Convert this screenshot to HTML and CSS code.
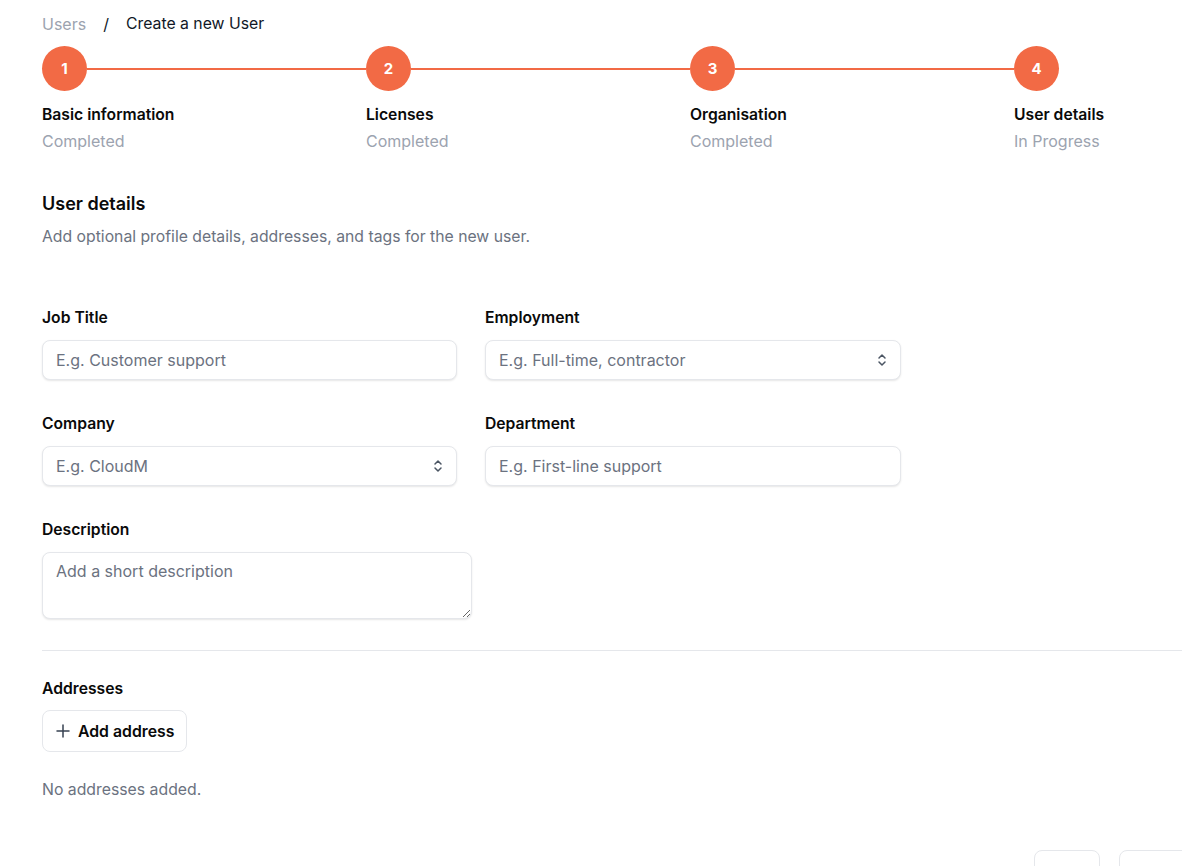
FILE: index.html
```html
<!DOCTYPE html>
<html lang="en">

<head>
    <meta charset="UTF-8">
    <meta name="viewport" content="width=device-width, initial-scale=1.0">
    <title>Create a new User</title>
    <link rel="stylesheet" href="styles.css">
</head>

<body>
    <div class="page">
        <div class="crumbs">
            <span class="crumb-link">Users</span>
            <span class="crumb-sep">/</span>
            <span class="crumb-current">Create a new User</span>
        </div>

        <ol class="stepper">
            <li class="step">
                <div class="step-track"><span class="step-dot">1</span><span class="step-line"></span></div>
                <div class="step-title">Basic information</div>
                <div class="step-status">Completed</div>
            </li>
            <li class="step">
                <div class="step-track"><span class="step-dot">2</span><span class="step-line"></span></div>
                <div class="step-title">Licenses</div>
                <div class="step-status">Completed</div>
            </li>
            <li class="step">
                <div class="step-track"><span class="step-dot">3</span><span class="step-line"></span></div>
                <div class="step-title">Organisation</div>
                <div class="step-status">Completed</div>
            </li>
            <li class="step">
                <div class="step-track"><span class="step-dot">4</span></div>
                <div class="step-title">User details</div>
                <div class="step-status">In Progress</div>
            </li>
        </ol>

        <h2 class="section-title">User details</h2>
        <p class="section-desc">Add optional profile details, addresses, and tags for the new user.</p>

        <div class="form-grid">
            <div class="field">
                <label class="field-label">Job Title</label>
                <input class="input" type="text" placeholder="E.g. Customer support">
            </div>
            <div class="field">
                <label class="field-label">Employment</label>
                <div class="input select">
                    <span class="placeholder">E.g. Full-time, contractor</span>
                    <svg class="chevrons" width="10" height="14" viewBox="0 0 10 14" fill="none" stroke="#4b5563" stroke-width="1.5" stroke-linecap="round" stroke-linejoin="round"><path d="M2 5 L5 2 L8 5"/><path d="M2 9 L5 12 L8 9"/></svg>
                </div>
            </div>
            <div class="field">
                <label class="field-label">Company</label>
                <div class="input select">
                    <span class="placeholder">E.g. CloudM</span>
                    <svg class="chevrons" width="10" height="14" viewBox="0 0 10 14" fill="none" stroke="#4b5563" stroke-width="1.5" stroke-linecap="round" stroke-linejoin="round"><path d="M2 5 L5 2 L8 5"/><path d="M2 9 L5 12 L8 9"/></svg>
                </div>
            </div>
            <div class="field">
                <label class="field-label">Department</label>
                <input class="input" type="text" placeholder="E.g. First-line support">
            </div>
            <div class="field">
                <label class="field-label">Description</label>
                <textarea class="input textarea" placeholder="Add a short description"></textarea>
            </div>
        </div>

        <hr class="divider">

        <div class="addresses">
            <div class="field-label">Addresses</div>
            <button class="btn-add" type="button">
                <svg width="14" height="14" viewBox="0 0 14 14" fill="none" stroke="#374151" stroke-width="1.5" stroke-linecap="round"><path d="M7 1v12M1 7h12"/></svg>
                Add address
            </button>
            <p class="empty">No addresses added.</p>
        </div>

        <div class="actions">
            <button class="btn-outline" type="button"></button>
            <button class="btn-outline btn-wide" type="button"></button>
        </div>
    </div>
</body>

</html>
```

FILE: styles.css
```css
* {
    margin: 0;
    padding: 0;
    box-sizing: border-box;
}

html,
body {
    overflow: hidden;
}

body {
    font-family: Inter, "Liberation Sans", sans-serif;
    color: #0a0a0a;
    background: #ffffff;
}

.page {
    width: 1338px;
    padding: 12px 0 40px 42px;
}

/* breadcrumb */
.crumbs {
    display: flex;
    gap: 16px;
    font-size: 16px;
    line-height: 24px;
}

.crumb-link {
    color: #9ca3af;
}

.crumb-sep {
    color: #111827;
    padding: 0 1px;
}

.crumb-current {
    color: #111827;
    font-size: 15.8px;
}

/* stepper */
.stepper {
    display: flex;
    list-style: none;
    margin-top: 10px;
}

.step {
    width: 324px;
}

.step-track {
    display: flex;
    align-items: center;
    height: 45px;
}

.step-dot {
    width: 45px;
    height: 45px;
    border-radius: 50%;
    background: #f26a45;
    color: #ffffff;
    font-size: 15px;
    font-weight: 700;
    display: flex;
    align-items: center;
    justify-content: center;
    flex-shrink: 0;
}

.step-line {
    flex: 1;
    height: 2px;
    background: #f26a45;
}

.step-title {
    margin-top: 13px;
    font-size: 15.7px;
    font-weight: 600;
    line-height: 22px;
}

.step-status {
    margin-top: 3px;
    font-size: 16px;
    line-height: 24px;
    color: #9ca3af;
}

/* section header */
.section-title {
    margin-top: 37px;
    font-size: 18px;
    font-weight: 600;
    line-height: 28px;
}

.section-desc {
    margin-top: 8px;
    font-size: 15.75px;
    line-height: 22px;
    color: #6b7280;
}

/* form */
.form-grid {
    display: grid;
    grid-template-columns: 415px 416px;
    column-gap: 28px;
    row-gap: 32px;
    margin-top: 58px;
}

.field {
    display: flex;
    flex-direction: column;
    gap: 11px;
}

.field-label {
    padding-top: 1px;
    font-size: 15.7px;
    font-weight: 600;
    line-height: 22px;
    color: #0a0a0a;
}

.input {
    height: 40px;
    width: 100%;
    border: 1px solid #e5e7eb;
    border-radius: 8px;
    box-shadow: 0 1px 2px rgba(0, 0, 0, 0.1);
    padding: 0 13px;
    font-family: inherit;
    font-size: 16px;
    color: #111827;
    background: #ffffff;
    outline: none;
}

.input::placeholder,
.placeholder {
    color: #6b7280;
}

.select {
    display: flex;
    align-items: center;
    justify-content: space-between;
    padding-right: 13px;
}

.textarea {
    width: 430px;
    height: 67px;
    padding: 8px 13px;
    line-height: 20px;
    resize: vertical;
}

.divider {
    border: none;
    border-top: 1px solid #e5e7eb;
    margin-top: 31px;
}

/* addresses */
.addresses {
    margin-top: 26px;
}

.btn-add {
    margin-top: 10px;
    display: flex;
    align-items: center;
    gap: 8px;
    height: 42px;
    padding: 0 12px 0 13px;
    border: 1px solid #e5e7eb;
    border-radius: 8px;
    background: #ffffff;
    font-family: inherit;
    font-size: 15.8px;
    font-weight: 600;
    color: #0a0a0a;
}

.empty {
    margin-top: 27px;
    font-size: 15.8px;
    line-height: 22px;
    color: #6b7280;
}

/* footer actions */
.actions {
    display: flex;
    justify-content: flex-end;
    gap: 19px;
    margin-top: 49px;
}

.btn-outline {
    height: 40px;
    width: 66px;
    border: 1px solid #e5e7eb;
    border-radius: 8px;
    background: #ffffff;
}

.btn-wide {
    width: 219px;
}
```
